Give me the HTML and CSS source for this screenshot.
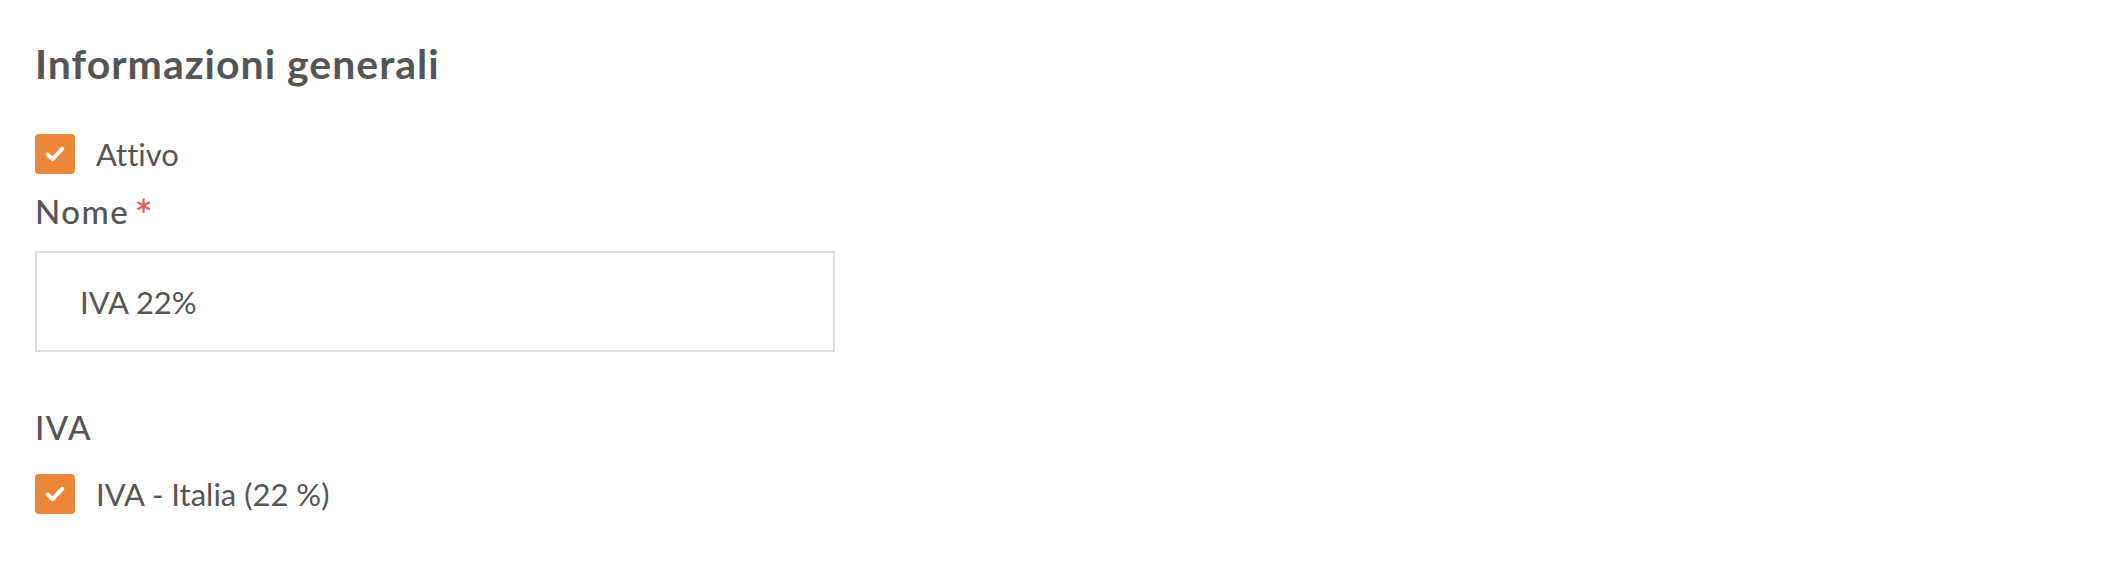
FILE: index.html
```html
<!DOCTYPE html>
<html lang="it">
<head>
  <meta charset="UTF-8">
  <meta name="viewport" content="width=device-width, initial-scale=1.0">
  <title>Informazioni generali</title>
  <link rel="stylesheet" href="styles.css">
</head>
<body>
  <!-- Sezione informazioni generali -->
  <section class="panel">
    <h2 class="panel-title">Informazioni generali</h2>

    <label class="check-row check-row-first">
      <span class="check-box">
        <svg class="check-icon" viewBox="0 0 20 18" aria-hidden="true">
          <path d="M2.8 9.6 L7.6 14.2 L17.2 3.8" fill="none" stroke="#ffffff" stroke-width="4" stroke-linecap="round" stroke-linejoin="round"/>
        </svg>
      </span>
      <span class="check-text">Attivo</span>
    </label>

    <div class="field-label">Nome<span class="required">*</span></div>
    <input class="text-input" type="text" value="IVA 22%">

    <div class="field-label field-label-gap">IVA</div>
    <label class="check-row">
      <span class="check-box">
        <svg class="check-icon" viewBox="0 0 20 18" aria-hidden="true">
          <path d="M2.8 9.6 L7.6 14.2 L17.2 3.8" fill="none" stroke="#ffffff" stroke-width="4" stroke-linecap="round" stroke-linejoin="round"/>
        </svg>
      </span>
      <span class="check-text">IVA - Italia (22 %)</span>
    </label>
  </section>
</body>
</html>
```

FILE: styles.css
```css
/* Stili generali */
body {
  margin: 0;
  background: #ffffff;
  font-family: Lato, "Noto Sans", sans-serif;
  font-variant-ligatures: none;
  color: #555555;
}

.panel {
  padding: 40px 35px 0;
  display: flex;
  flex-direction: column;
  align-items: flex-start;
}

/* Titolo */
.panel-title {
  margin: 0 0 46px;
  font-size: 41px;
  line-height: 48px;
  font-weight: 700;
  letter-spacing: 1px;
  color: #555555;
}

/* Checkbox */
.check-row {
  display: flex;
  align-items: center;
  gap: 21px;
  height: 40px;
  font-size: 31px;
  line-height: 40px;
}

.check-row-first {
  margin-bottom: 17px;
}

.check-box {
  flex: none;
  width: 40px;
  height: 40px;
  border-radius: 4px;
  background: #ee8637;
  display: flex;
  justify-content: center;
  align-items: center;
}

.check-icon {
  flex: none;
  width: 20px;
  height: 18px;
}

.check-text {
  color: #555555;
}

/* Etichette e campi */
.field-label {
  height: 40px;
  font-size: 33px;
  line-height: 40px;
  font-weight: 500;
  letter-spacing: 1.5px;
  margin-bottom: 20px;
}

.field-label-gap {
  margin-top: 55px;
  margin-bottom: 27px;
}

.required {
  display: inline-block;
  margin: 9px 0 0 5px;
  font-size: 44px;
  line-height: 30px;
  vertical-align: top;
  color: #e35d5d;
}

.text-input {
  box-sizing: border-box;
  width: 800px;
  height: 101px;
  margin: 0;
  padding: 0 20px 0 43px;
  border: 2px solid #d7dde1;
  border-radius: 0;
  background: #ffffff;
  font-family: inherit;
  font-size: 31px;
  color: #555555;
  outline: none;
}
```
